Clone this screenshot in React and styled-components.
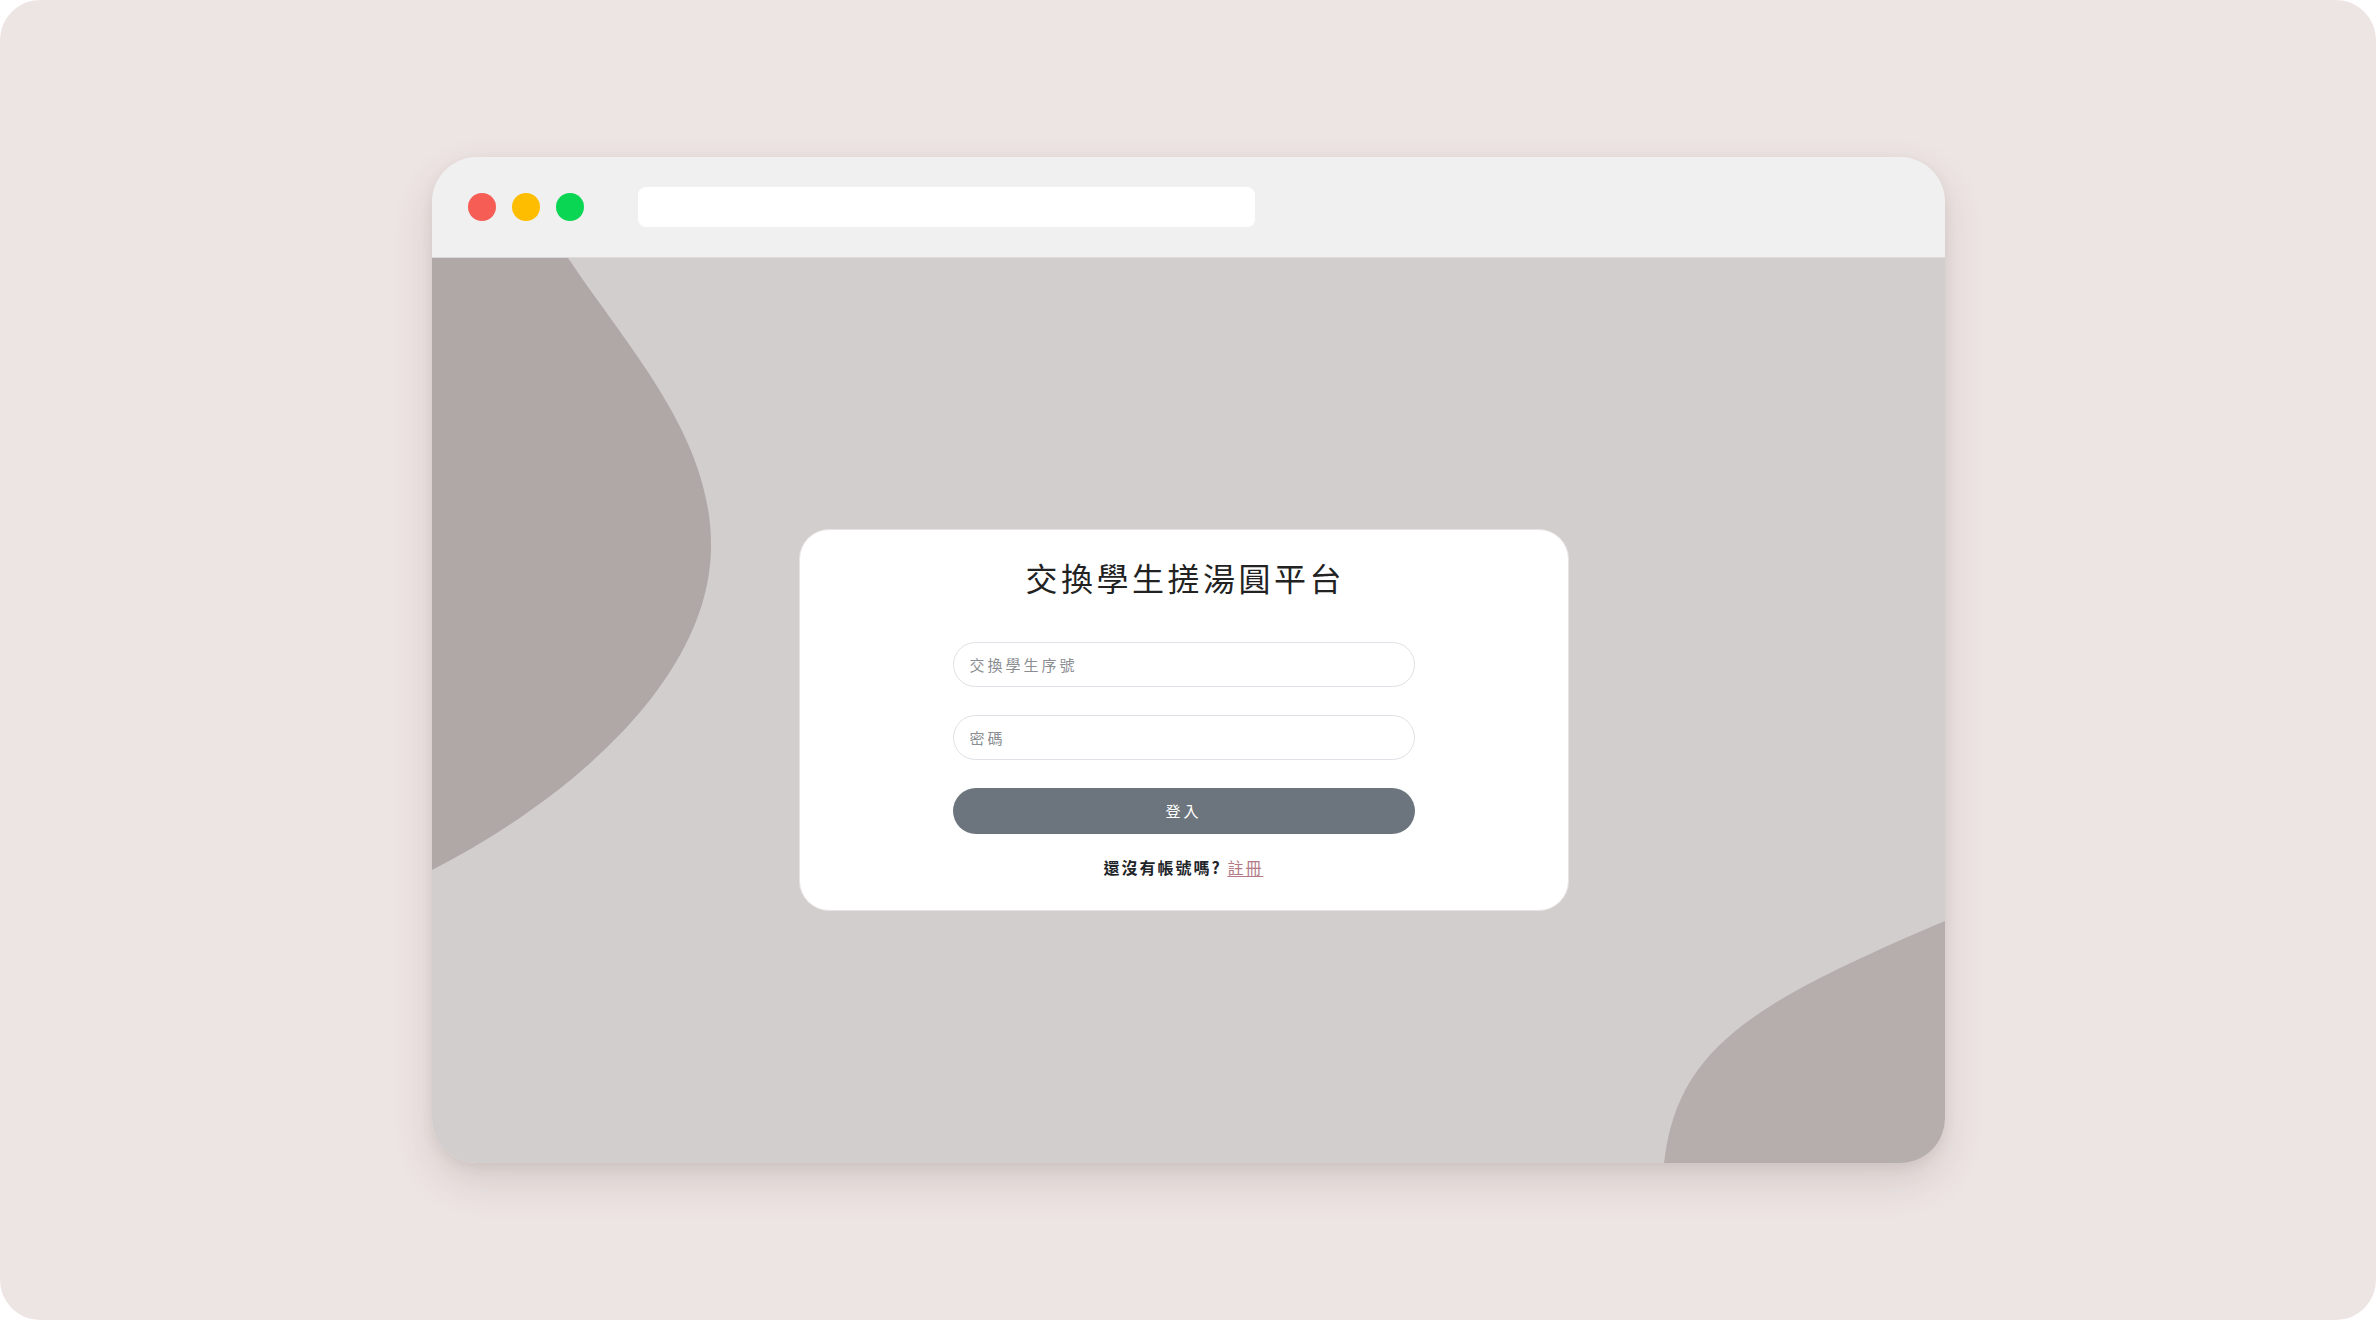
import React from 'react';
import styled, { createGlobalStyle } from 'styled-components';

const GlobalStyle = createGlobalStyle`
  html, body {
    margin: 0;
    padding: 0;
    background: #ffffff;
  }
  * {
    box-sizing: border-box;
  }
`;

const cjk = `"Noto Sans CJK TC", "Noto Sans", sans-serif`;

function App() {
  return (
    <>
      <GlobalStyle />
      <Stage>
        <BrowserWindow>
          <TitleBar>
            <Dots>
              <Dot color="#f55d55" />
              <Dot color="#ffbd00" />
              <Dot color="#0ad653" />
            </Dots>
            <AddressBar />
          </TitleBar>

          <Viewport>
            <Blobs viewBox="0 0 1513 905" preserveAspectRatio="none">
              <path
                d="M0,0 L136,0 C200,95 280,180 279,289 C278,420 140,540 0,612 Z"
                fill="#afa8a6"
              />
              <path
                d="M1232,905 C1245,790 1320,745 1513,663 L1513,905 Z"
                fill="#b5aeac"
              />
            </Blobs>

            <LoginCard>
              <Title>交換學生搓湯圓平台</Title>
              <Form onSubmit={(e) => e.preventDefault()}>
                <Input type="text" placeholder="交換學生序號" />
                <Input type="password" placeholder="密碼" />
                <SubmitButton type="submit">登入</SubmitButton>
              </Form>
              <SignupLine>
                還沒有帳號嗎? <SignupLink href="#">註冊</SignupLink>
              </SignupLine>
            </LoginCard>
          </Viewport>
        </BrowserWindow>
      </Stage>
    </>
  );
}

export default App;

const Stage = styled.div`
  width: 2376px;
  height: 1320px;
  background: #ede5e3;
  border-radius: 40px;
  display: flex;
  align-items: center;
  justify-content: center;
`;

const BrowserWindow = styled.div`
  width: 1513px;
  height: 1006px;
  border-radius: 45px;
  overflow: hidden;
  display: flex;
  flex-direction: column;
  box-shadow: 0 18px 40px rgba(90, 70, 70, 0.16), 0 4px 12px rgba(90, 70, 70, 0.08);
`;

const TitleBar = styled.div`
  height: 101px;
  flex-shrink: 0;
  background: #f0f0f0;
  display: flex;
  align-items: center;
  padding-left: 36px;
  gap: 54px;
  border-bottom: 1px solid #dcd8d7;
`;

const Dots = styled.div`
  display: flex;
  gap: 16px;
`;

const Dot = styled.span`
  width: 28px;
  height: 28px;
  border-radius: 50%;
  background: ${(p) => p.color};
`;

const AddressBar = styled.div`
  width: 617px;
  height: 40px;
  border-radius: 8px;
  background: #ffffff;
`;

const Viewport = styled.div`
  position: relative;
  flex: 1;
  background: #d2cecd;
  display: flex;
  align-items: center;
  justify-content: center;
  padding: 18px 9px 0 0;
`;

const Blobs = styled.svg`
  position: absolute;
  inset: 0;
  width: 100%;
  height: 100%;
`;

const LoginCard = styled.div`
  position: relative;
  width: 770px;
  height: 382px;
  background: #ffffff;
  border-radius: 30px;
  border: 1px solid #e6e2e1;
  display: flex;
  flex-direction: column;
  align-items: center;
  padding-top: 26px;
  font-family: ${cjk};
  color: #212529;
`;

const Title = styled.h1`
  margin: 0 -3.5px 0 0;
  font-size: 32px;
  font-weight: 400;
  letter-spacing: 3.5px;
  line-height: 42px;
  color: #222;
`;

const Form = styled.form`
  width: 462px;
  margin-top: 44px;
  display: flex;
  flex-direction: column;
  gap: 28px;
`;

const Input = styled.input`
  height: 45px;
  width: 100%;
  border: 1.5px solid #dee2e6;
  border-radius: 23px;
  padding: 0 16px;
  font-family: ${cjk};
  font-size: 15px;
  letter-spacing: 3px;
  color: #212529;
  background: #fff;
  outline: none;
  &::placeholder {
    color: #8a8d91;
  }
`;

const SubmitButton = styled.button`
  height: 46px;
  width: 100%;
  border: none;
  border-radius: 23px;
  background: #6c757d;
  color: #ffffff;
  font-family: ${cjk};
  font-size: 15px;
  letter-spacing: 3px;
  cursor: pointer;
`;

const SignupLine = styled.p`
  margin: 21px 0 0;
  font-size: 16px;
  font-weight: 700;
  letter-spacing: 2px;
  color: #212529;
`;

const SignupLink = styled.a`
  color: #b27a86;
  font-weight: 400;
  text-decoration: underline;
  text-underline-offset: 2px;
`;
